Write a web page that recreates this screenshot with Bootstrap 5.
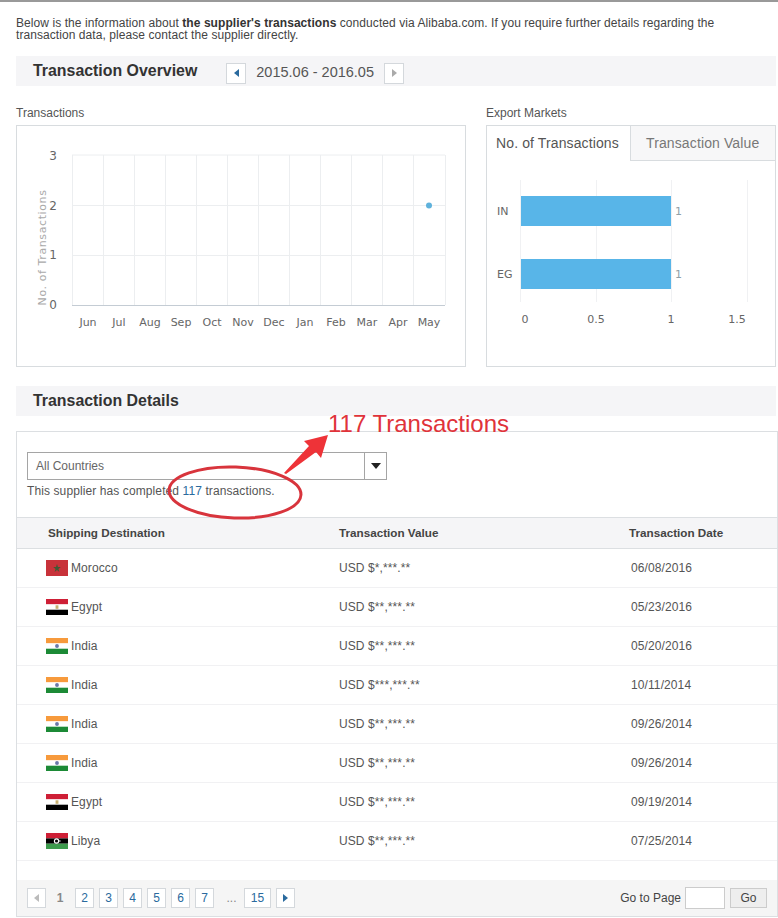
<!DOCTYPE html>
<html lang="en">
<head>
    <meta charset="UTF-8">
    <meta name="viewport" content="width=device-width, initial-scale=1.0">
    <title>Transaction History</title>
    <link href="https://cdn.jsdelivr.net/npm/bootstrap@5.3.0/dist/css/bootstrap.min.css" rel="stylesheet">
    <style>
        body {
            margin: 0;
            background-color: #fff;
            font-family: "Liberation Sans", Arial, sans-serif;
            font-size: 12px;
            color: #444;
        }
        .page-wrap {
            position: relative;
            width: 778px;
            height: 918px;
            overflow: hidden;
            border-top: 2px solid #999;
            padding: 15px 2px 0 16px;
        }
        .intro {
            line-height: 12px;
            width: 740px;
            margin: 0 0 15px;
            letter-spacing: .07px;
        }
        .intro b { color: #333; }
        .sect-bar {
            height: 30px;
            background-color: #f5f5f7;
            padding-left: 17px;
            align-items: center;
        }
        .sect-bar h2 {
            font-size: 15.9px;
            font-weight: 700;
            color: #333;
            margin: 0;
        }
        .arrow-btn {
            width: 20px;
            height: 21px;
            border: 1px solid #d4d8dc;
            background: #fff;
            padding: 0;
            display: flex;
            align-items: center;
            justify-content: center;
        }
        .tri { display: block; width: 5px; height: 8px; }
        .date-range { font-size: 14.5px; color: #555; margin: 0 10px; }
        .panel-title { line-height: 14px; margin-bottom: 5px; color: #555; }
        .chart-box {
            height: 242px;
            border: 1px solid #d8dcdf;
        }
        .chart-left { width: 450px; }
        .chart-right { width: 290px; }
        .chart-box svg { display: block; }
        .chart-txt { font-family: "DejaVu Sans", sans-serif; font-size: 11px; fill: #666; }
        .tab-row { height: 35px; }
        .tab-on, .tab-off {
            font-size: 14px;
            line-height: 34px;
            color: #555;
            padding-left: 9px;
            letter-spacing: .12px;
        }
        .tab-on { width: 143px; }
        .tab-off {
            flex: 1;
            background: #f7f7f8;
            color: #777;
            border-left: 1px solid #d8dcdf;
            border-bottom: 1px solid #d8dcdf;
            padding-left: 15px;
        }
        .detail-box {
            width: 762px;
            height: 486px;
            border: 1px solid #dcdfe2;
            margin-top: 15px;
            display: flex;
            flex-direction: column;
        }
        .filter-area { padding: 20px 10px 0; height: 85px; }
        .fake-select {
            width: 360px;
            height: 28px;
            border: 1px solid #a5a5a5;
            color: #666;
            padding-left: 8px;
            line-height: 26px;
        }
        .fake-select .caret-cell {
            width: 22px;
            height: 100%;
            border-left: 1px solid #a5a5a5;
            align-items: center;
            justify-content: center;
        }
        .caret-down {
            width: 0;
            height: 0;
            border-left: 5px solid transparent;
            border-right: 5px solid transparent;
            border-top: 6px solid #222;
        }
        .done-line { margin-top: 4px; line-height: 14px; color: #555; letter-spacing: .1px; }
        .done-line a { color: #2a6a9e; text-decoration: none; }
        .tx-table {
            width: 100%;
            table-layout: fixed;
            margin: 0;
            font-size: 12px;
            color: #555;
        }
        .tx-table th {
            height: 31px;
            padding: 0;
            background: #f5f5f7;
            color: #444;
            font-size: 11.7px;
            border-top: 1px solid #dcdfe2;
            border-bottom: 1px solid #dcdfe2;
            vertical-align: middle;
        }
        .tx-table td {
            height: 39px;
            padding: 0;
            border-bottom: 1px solid #f1f1f3;
            vertical-align: middle;
            letter-spacing: .1px;
        }
        .tx-table th:first-child { padding-left: 31px; }
        .tx-table td:first-child { padding-left: 29px; }
        .tx-table td:last-child { padding-left: 2px; }
        .flag-ico { width: 22px; height: 16px; margin-right: 3px; vertical-align: -4px; }
        .pager-bar {
            margin-top: auto;
            height: 36px;
            background: #f5f5f5;
            padding: 0 10px;
            align-items: center;
        }
        .pg {
            height: 20px;
            min-width: 19px;
            border: 1px solid #d4d8dc;
            background: #fff;
            color: #2a6a9e;
            font-size: 12px;
            line-height: 18px;
            text-align: center;
            margin-right: 5px;
            display: flex;
            align-items: center;
            justify-content: center;
        }
        .pg-cur { color: #888; font-weight: 700; width: 28px; text-align: center; }
        .pg-dots { color: #888; width: 25px; text-align: center; }
        .pg-wide { width: 27px; }
        .goto-input {
            width: 40px;
            height: 22px;
            border: 1px solid #ccc;
            background: #fff;
            margin: 0 5px 0 4px;
        }
        .go-btn {
            width: 37px;
            height: 20px;
            border: 1px solid #ccc;
            background: #eee;
            color: #444;
            font-size: 12px;
            padding: 0;
        }
        .note-layer { position: absolute; left: 0; top: -2px; pointer-events: none; }
        .note-txt { font-family: "Liberation Sans", sans-serif; font-size: 24px; fill: #e0333a; }
    </style>
</head>
<body>
<div class="page-wrap">
    <p class="intro">Below is the information about <b>the supplier's transactions</b> conducted via Alibaba.com. If you require further details regarding the transaction data, please contact the supplier directly.</p>

    <div class="sect-bar d-flex">
        <h2>Transaction Overview</h2>
        <span class="arrow-btn mt-1" style="margin-left:29px">
            <svg class="tri" viewBox="0 0 5 8"><path d="M5 0V8L0 4Z" fill="#2a6a9e"/></svg>
        </span>
        <span class="date-range mt-1">2015.06 - 2016.05</span>
        <span class="arrow-btn mt-1">
            <svg class="tri" viewBox="0 0 5 8"><path d="M0 0V8L5 4Z" fill="#aaa"/></svg>
        </span>
    </div>

    <div class="d-flex" style="gap:20px;margin-top:20px">
        <div class="chart-left">
            <div class="panel-title">Transactions</div>
            <div class="chart-box">
                <svg width="448" height="240" viewBox="17 126 448 240">
                    <g stroke="#eceef0" fill="none">
                        <path d="M72 155H445M72 205.500H445M72 255.500H445"/>
                        <path d="M72.500 155V305M103.500 155V305M134.500 155V305M165.500 155V305M196.500 155V305M227.500 155V305M258.500 155V305M289.500 155V305M320.500 155V305M351.500 155V305M382.500 155V305M413.500 155V305M445.500 155V305"/>
                    </g>
                    <path d="M72 305.500H445" stroke="#c4ccd4"/>
                    <circle cx="429" cy="205.500" r="3" fill="#5fb2dc"/>
                    <g class="chart-txt" text-anchor="end" style="font-size:12px">
                        <text x="57" y="160">3</text>
                        <text x="57" y="210">2</text>
                        <text x="57" y="259">1</text>
                        <text x="57" y="309">0</text>
                    </g>
                    <text class="chart-txt" transform="translate(46 247.500) rotate(-90)" text-anchor="middle" style="fill:#aaa;letter-spacing:.6px">No. of Transactions</text>
                    <g class="chart-txt" text-anchor="middle">
                        <text x="88" y="326">Jun</text>
                        <text x="119" y="326">Jul</text>
                        <text x="150" y="326">Aug</text>
                        <text x="181" y="326">Sep</text>
                        <text x="212" y="326">Oct</text>
                        <text x="243" y="326">Nov</text>
                        <text x="274" y="326">Dec</text>
                        <text x="305" y="326">Jan</text>
                        <text x="336" y="326">Feb</text>
                        <text x="367" y="326">Mar</text>
                        <text x="398" y="326">Apr</text>
                        <text x="429" y="326">May</text>
                    </g>
                </svg>
            </div>
        </div>
        <div class="chart-right">
            <div class="panel-title">Export Markets</div>
            <div class="chart-box">
                <div class="d-flex tab-row">
                    <div class="tab-on">No. of Transactions</div>
                    <div class="tab-off">Transaction Value</div>
                </div>
                <svg width="288" height="205" viewBox="487 161 288 205">
                    <path d="M520.500 180V302M596.500 180V302M671.500 180V302M747.500 180V302" stroke="#f0f1f3"/>
                    <rect x="521" y="196" width="150" height="30" fill="#58b5e8"/>
                    <rect x="521" y="259" width="150" height="30" fill="#58b5e8"/>
                    <g class="chart-txt">
                        <text x="497" y="215">IN</text>
                        <text x="497" y="278">EG</text>
                    </g>
                    <g class="chart-txt" style="fill:#8fa0a8">
                        <text x="675" y="215">1</text>
                        <text x="675" y="278">1</text>
                    </g>
                    <g class="chart-txt" text-anchor="middle">
                        <text x="525" y="323">0</text>
                        <text x="596" y="323">0.5</text>
                        <text x="671" y="323">1</text>
                        <text x="737" y="323">1.5</text>
                    </g>
                </svg>
            </div>
        </div>
    </div>

    <div class="sect-bar d-flex" style="margin-top:19px">
        <h2>Transaction Details</h2>
    </div>

    <div class="detail-box">
        <div class="filter-area">
            <div class="fake-select d-flex justify-content-between">
                <span>All Countries</span>
                <span class="caret-cell d-flex"><span class="caret-down"></span></span>
            </div>
            <div class="done-line">This supplier has completed <a href="#">117</a> transactions.</div>
        </div>
        <table class="table tx-table">
            <colgroup><col style="width:322px"><col style="width:290px"><col></colgroup>
            <thead>
                <tr><th>Shipping Destination</th><th>Transaction Value</th><th>Transaction Date</th></tr>
            </thead>
            <tbody id="txRows"></tbody>
        </table>
        <div class="pager-bar d-flex">
            <span class="pg"><svg class="tri" viewBox="0 0 5 8"><path d="M5 0V8L0 4Z" fill="#bbb"/></svg></span>
            <span class="pg-cur" style="margin:0 1px 0 -5px">1</span>
            <span class="pg">2</span><span class="pg">3</span><span class="pg">4</span><span class="pg">5</span><span class="pg">6</span><span class="pg">7</span>
            <span class="pg-dots">...</span>
            <span class="pg pg-wide">15</span>
            <span class="pg"><svg class="tri" viewBox="0 0 5 8"><path d="M0 0V8L5 4Z" fill="#2a6a9e"/></svg></span>
            <span class="ms-auto">Go to Page</span>
            <span class="goto-input"></span>
            <button class="go-btn" type="button">Go</button>
        </div>
    </div>

    <svg class="note-layer" width="778" height="918">
        <ellipse cx="235" cy="492.500" rx="66" ry="25.500" fill="none" stroke="#d8343c" stroke-width="3" transform="rotate(2 235 492.500)"/>
        <path d="M284 473L309 446L304 441L328 435L321 458L316 452L286 474Z" fill="#ee3338"/>
        <text class="note-txt" x="328" y="432">117 Transactions</text>
    </svg>
</div>

<script>
    const flags = {
        Morocco: '<rect width="23" height="16" fill="#c8323a"/><path d="M11.500 4l1 3h3l-2.500 2 1 3-2.500-2-2.500 2 1-3L7.500 7h3z" fill="#3f5a35"/>',
        Egypt: '<rect width="23" height="5.400" fill="#ce1f36"/><rect y="5.400" width="23" height="5.300" fill="#fff"/><rect y="10.700" width="23" height="5.300" fill="#000"/><rect x="10" y="6.300" width="3" height="3.500" fill="#c8b070"/>',
        India: '<rect width="23" height="5.400" fill="#f79a3c"/><rect y="5.400" width="23" height="5.300" fill="#fff"/><rect y="10.700" width="23" height="5.300" fill="#1c8a36"/><circle cx="11.500" cy="8" r="2" fill="#6a78a8"/>',
        Libya: '<rect width="23" height="5.400" fill="#ce1f36"/><rect y="5.400" width="23" height="5.300" fill="#000"/><rect y="10.700" width="23" height="5.300" fill="#3d9a4c"/><circle cx="11" cy="8" r="2.200" fill="none" stroke="#fff" stroke-width="1.200"/><circle cx="14.500" cy="8" r=".8" fill="#fff"/>'
    };
    const rows = [
        ['Morocco', 'USD $*,***.**', '06/08/2016'],
        ['Egypt', 'USD $**,***.**', '05/23/2016'],
        ['India', 'USD $**,***.**', '05/20/2016'],
        ['India', 'USD $***,***.**', '10/11/2014'],
        ['India', 'USD $**,***.**', '09/26/2014'],
        ['India', 'USD $**,***.**', '09/26/2014'],
        ['Egypt', 'USD $**,***.**', '09/19/2014'],
        ['Libya', 'USD $**,***.**', '07/25/2014']
    ];
    document.getElementById('txRows').innerHTML = rows.map(r => `
        <tr>
            <td><svg class="flag-ico" viewBox="0 0 23 16" preserveAspectRatio="none">${flags[r[0]]}</svg>${r[0]}</td>
            <td>${r[1]}</td>
            <td>${r[2]}</td>
        </tr>`).join('');
</script>
</body>
</html>
